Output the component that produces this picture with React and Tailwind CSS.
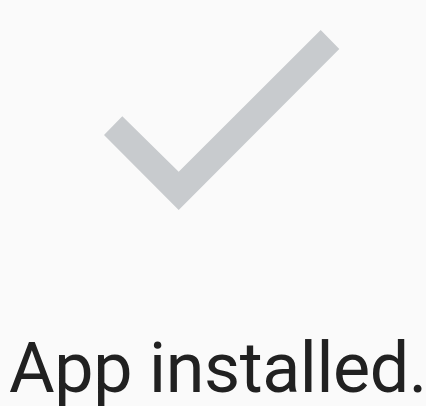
import React from 'react';

const CheckMark = () => (
  <svg width="426" height="232" viewBox="0 0 426 232" className="block shrink-0">
    <polygon
      points="122.3,116.3 178.7,171.7 320.7,30 339.3,49 178.7,210 104,135"
      fill="#c8cbce"
    />
  </svg>
);

const App = () => {
  return (
    <div className="w-[426px] h-[406px] overflow-hidden bg-[#fafafa] flex flex-col">
      <CheckMark />
      <p className="mt-[101px] pl-[9px] text-[70px] leading-[70px] tracking-[-0.4px] text-[#212121] whitespace-nowrap font-['Roboto',sans-serif]">
        App installed.
      </p>
    </div>
  );
};

export default App;
